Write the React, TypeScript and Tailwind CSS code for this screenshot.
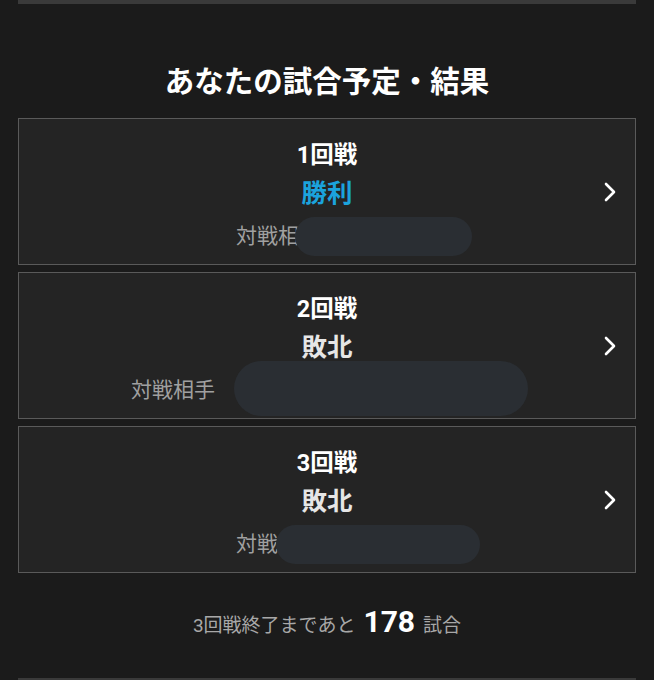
import React from "react";

type Match = {
  round: string;
  result: string;
  win: boolean;
  rowPad: string;
  pill: string;
};

const matches: Match[] = [
  { round: "1回戦", result: "勝利", win: true, rowPad: "pl-[217px]", pill: "ml-[-25px] w-[177px] h-[39px]" },
  { round: "2回戦", result: "敗北", win: false, rowPad: "pl-[112px]", pill: "ml-[19px] w-[294px] h-[55px] -translate-y-[2px]" },
  { round: "3回戦", result: "敗北", win: false, rowPad: "pl-[217px]", pill: "ml-[-44px] w-[204px] h-[39px]" },
];

function Chevron() {
  return (
    <svg width="14" height="22" viewBox="0 0 14 22" fill="none">
      <polyline points="3,3 11,11 3,19" stroke="#ffffff" strokeWidth="2.6" strokeLinecap="round" strokeLinejoin="round" />
    </svg>
  );
}

function Card({ m }: { m: Match }) {
  return (
    <div className="relative h-[147px] border border-[#5a5a5a] bg-[#242424] flex flex-col items-center">
      <div className="mt-[22px] h-[28px] leading-[28px] text-[23.5px] font-bold text-white">{m.round}</div>
      <div
        className={
          m.win
            ? "mt-[8px] h-[32px] leading-[32px] text-[25.5px] font-bold text-[#1ba3dd]"
            : "mt-[8px] h-[32px] leading-[32px] text-[25.5px] font-bold text-[#e6e6e6]"
        }
      >
        {m.result}
      </div>
      <div className={"mt-[13px] h-[28px] w-full flex items-center " + m.rowPad}>
        <span className="text-[21px] leading-[28px] text-[#a0a0a0] w-[84px] shrink-0 whitespace-nowrap">対戦相手</span>
        <span className={"shrink-0 rounded-full bg-[#2a2e33] " + m.pill}></span>
      </div>
      <div className="absolute right-[18px] top-0 bottom-0 flex items-center">
        <Chevron />
      </div>
    </div>
  );
}

export default function App() {
  return (
    <div
      className="min-h-[680px] h-[680px] overflow-hidden bg-[#1b1b1b] px-[18px]"
      style={{ fontFamily: 'Roboto, "Noto Sans CJK JP", sans-serif' }}
    >
      <div className="h-[4px] bg-[#3a3a3a]"></div>
      <h2 className="mt-[58px] h-[40px] leading-[40px] text-center text-[29.5px] font-bold text-white">
        あなたの試合予定・結果
      </h2>
      <div className="mt-[16px] flex flex-col gap-[7px]">
        {matches.map((m) => (
          <Card key={m.round} m={m} />
        ))}
      </div>
      <div className="mt-[26px] flex items-baseline justify-center text-[#a8a8a8]">
        <span className="text-[19px]">3回戦終了まであと</span>
        <span className="mx-[8px] text-[30px] font-bold text-white">178</span>
        <span className="text-[19px]">試合</span>
      </div>
      <div className="mt-[34px] h-[20px] border-t-[2px] border-[#3a3a3a]"></div>
    </div>
  );
}
